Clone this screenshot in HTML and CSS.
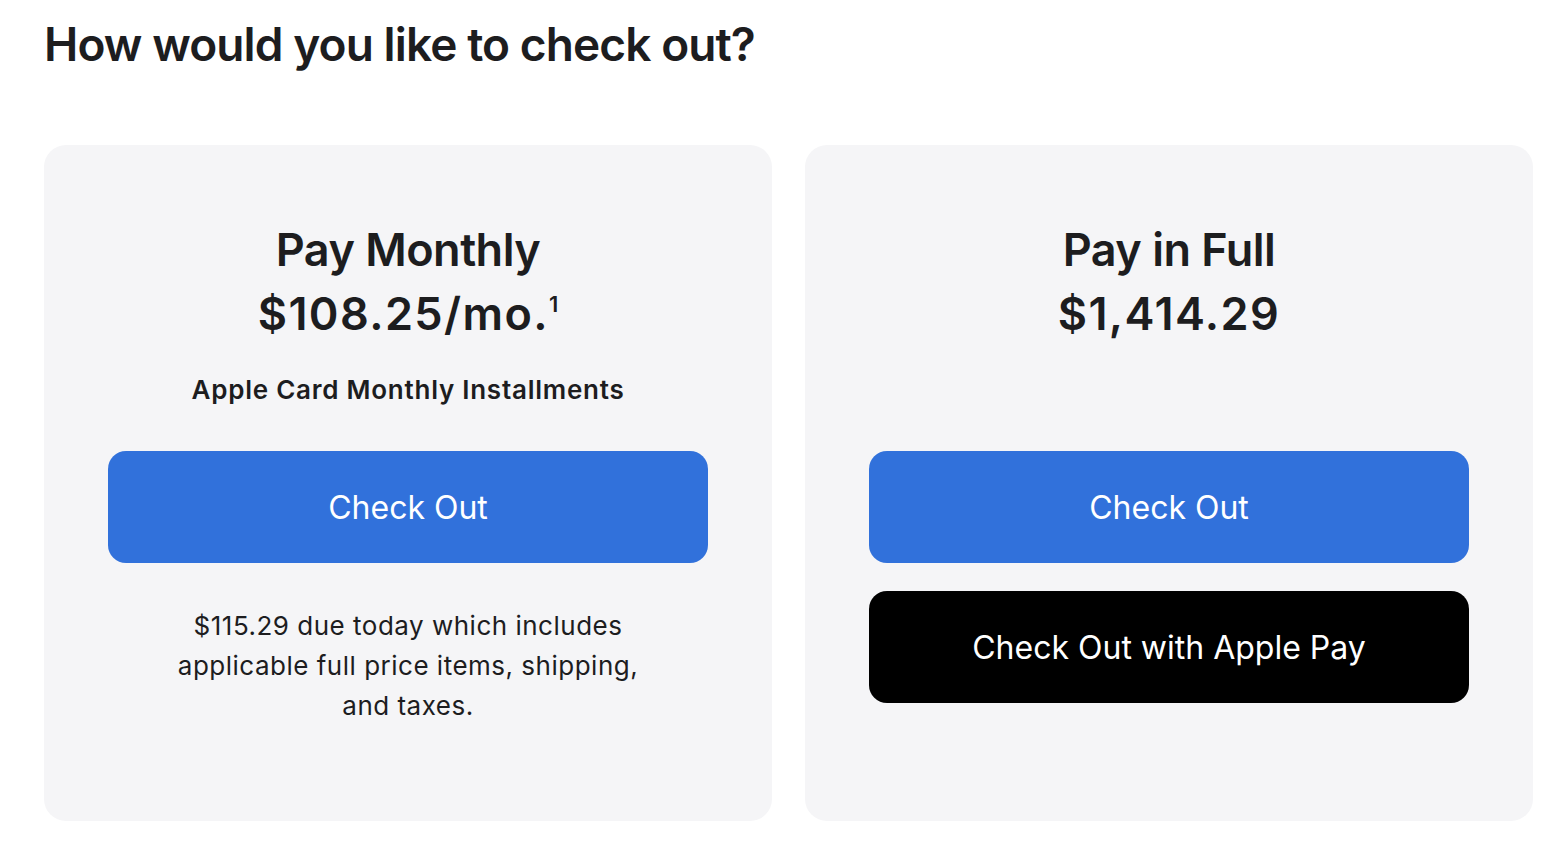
FILE: index.html
```html
<!DOCTYPE html>
<html lang="en">
<head>
<meta charset="utf-8">
<title>Checkout</title>
<link rel="stylesheet" href="styles.css">
</head>
<body>
<main class="page">
  <h1 class="title">How would you like to check out?</h1>
  <div class="cards">
    <section class="card">
      <div class="card-head">
        <h2 class="plan">Pay Monthly<br><span class="price">$108.25/mo.<sup class="note">1</sup></span></h2>
        <p class="sub">Apple Card Monthly Installments</p>
      </div>
      <button class="btn btn-blue">Check Out</button>
      <p class="info">$115.29 due today which includes applicable full price items, shipping, and taxes.</p>
    </section>
    <section class="card">
      <div class="card-head">
        <h2 class="plan">Pay in Full<br><span class="price">$1,414.29</span></h2>
      </div>
      <button class="btn btn-blue">Check Out</button>
      <button class="btn btn-black">Check Out with Apple Pay</button>
    </section>
  </div>
</main>
</body>
</html>
```

FILE: styles.css
```css
* { box-sizing: border-box; }
html, body { margin: 0; padding: 0; background: #ffffff; }
body {
  font-family: Inter, "Noto Sans", "Liberation Sans", sans-serif;
  color: #1d1d1f;
}
.page {
  padding: 16px 31px 0 44px;
}
.title {
  margin: 0;
  font-size: 46px;
  line-height: 56px;
  font-weight: 600;
  letter-spacing: -0.9px;
}
.cards {
  margin-top: 73px;
  display: grid;
  grid-template-columns: 728px 728px;
  gap: 33px;
}
.card {
  background: #f5f5f7;
  border-radius: 22px;
  height: 676px;
  padding: 73px 64px 0;
  display: flex;
  flex-direction: column;
  align-items: center;
}
.card-head {
  min-height: 233px;
  width: 100%;
  text-align: center;
}
.plan {
  margin: 0;
  font-size: 45px;
  line-height: 64px;
  font-weight: 600;
  letter-spacing: -0.5px;
}
.price {
  letter-spacing: 1.4px;
}
.note {
  font-size: 22px;
  line-height: 0;
  vertical-align: 18px;
  margin-left: 0;
  letter-spacing: 0;
}
.sub {
  margin: 26px 0 0;
  font-size: 26px;
  line-height: 36px;
  font-weight: 600;
  letter-spacing: 0.75px;
}
.btn {
  width: 600px;
  height: 112px;
  border: 0;
  border-radius: 18px;
  color: #ffffff;
  font-family: inherit;
  font-size: 32px;
  font-weight: 400;
  letter-spacing: 0;
  cursor: pointer;
}
.btn-blue { background: #3171db; }
.btn-black { background: #000000; margin-top: 28px; }
.info {
  margin: 43px 0 0;
  width: 480px;
  text-align: center;
  font-size: 26px;
  line-height: 40px;
  letter-spacing: 0.5px;
}
```
